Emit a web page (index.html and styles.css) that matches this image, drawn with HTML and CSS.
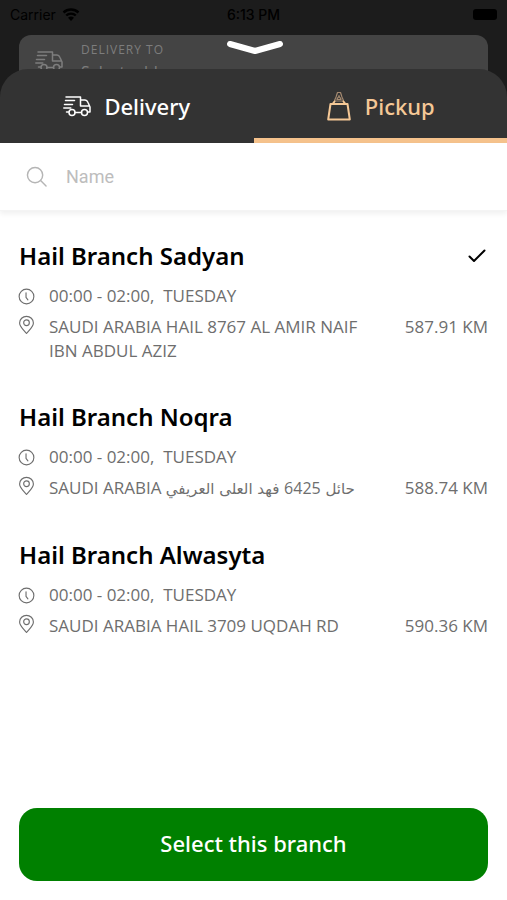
FILE: index.html
```
<!DOCTYPE html>
<html lang="en">
<head>
    <meta charset="UTF-8">
    <meta name="viewport" content="width=device-width, initial-scale=1.0">
    <title>Select branch</title>
    <link rel="stylesheet" href="styles.css">
</head>
<body>
    <!-- shared icons -->
    <svg class="sprite" aria-hidden="true">
        <symbol id="icon-truck" viewBox="0 0 28 22">
            <path d="M3 2h14.500v3M17.500 5h4.500q2 0 3 2.500l2 4.500v5h-2M17.500 5v6h8M3.500 17h2M2.500 5.500h9M1.500 9.500h8M0.800 13h7"/>
            <circle cx="9" cy="17.500" r="3"/>
            <circle cx="21.500" cy="17.500" r="3"/>
            <path d="M12 17.500h6.500"/>
        </symbol>
        <symbol id="icon-clock" viewBox="0 0 18 18">
            <circle cx="9" cy="9" r="7.800"/>
            <path d="M8.500 5v5l2 2.500"/>
        </symbol>
        <symbol id="icon-pin" viewBox="0 0 18 20">
            <path d="M9 19C6.500 15.500 1.700 12 1.700 7.800a7.300 7 0 0 1 14.600 0C16.300 12 11.500 15.500 9 19z"/>
            <circle cx="9" cy="7.600" r="3"/>
        </symbol>
    </svg>

    <!-- page behind the sheet -->
    <div class="backdrop">
        <div class="status">
            <span class="carrier">Carrier
                <svg class="wifi" viewBox="0 0 18 13">
                    <path d="M1.500 4.500a11 11 0 0 1 15 0M4.200 7.500a7 7 0 0 1 9.600 0"/>
                    <path class="wifi-dot" d="M6 9.800a4.500 4.500 0 0 1 6 0L9 13z"/>
                </svg>
            </span>
            <span class="time">6:13 PM</span>
            <span class="battery-wrap"><span class="battery"></span></span>
        </div>
        <div class="address">
            <svg class="icon-truck"><use href="#icon-truck"/></svg>
            <div>
                <div class="address-label">DELIVERY TO</div>
                <div class="address-value">Select address</div>
            </div>
        </div>
    </div>

    <button class="handle" aria-label="Close">
        <svg viewBox="0 0 58 16"><path d="M4 4l25 7 25-7"/></svg>
    </button>

    <main class="sheet">
        <nav class="tabs">
            <button class="tab">
                <svg class="icon-truck"><use href="#icon-truck"/></svg>
                Delivery
            </button>
            <button class="tab selected">
                <svg class="icon-bag" viewBox="0 0 24 32">
                    <path class="bag-handle" d="M7.500 11.500c0-2.500 1.500-3 2-6L10.500 2.500h3l1 3c.5 3 2 3.500 2 6M10 9.500c0-2 2-1.500 2-4 0 2.500 2 2 2 4zM8.500 11h7"/>
                    <path class="bag-body" d="M3.500 14h17l2.300 15.500H1.200zM6 13.500l1.500-2M18 13.500l-1.500-2"/>
                </svg>
                Pickup
            </button>
        </nav>

        <label class="search">
            <svg class="icon-search" viewBox="0 0 22 22"><circle cx="9.500" cy="9.500" r="8"/><path d="M15.300 15.300L21 21"/></svg>
            <input type="text" placeholder="Name" aria-label="Name">
        </label>

        <div class="branches">
            <section class="branch">
                <div class="branch-head">
                    <h2>Hail Branch Sadyan</h2>
                    <svg class="icon-check" viewBox="0 0 20 16"><path d="M1.500 8.500l4.500 4.500L16.500 2.500"/></svg>
                </div>
                <div class="row">
                    <svg class="icon-clock"><use href="#icon-clock"/></svg>
                    <p>00:00 - 02:00,&nbsp; TUESDAY</p>
                </div>
                <div class="row">
                    <svg class="icon-pin"><use href="#icon-pin"/></svg>
                    <p>SAUDI ARABIA HAIL 8767 AL AMIR NAIF IBN ABDUL AZIZ</p>
                    <span class="distance">587.91 KM</span>
                </div>
            </section>

            <section class="branch">
                <div class="branch-head">
                    <h2>Hail Branch Noqra</h2>
                </div>
                <div class="row">
                    <svg class="icon-clock"><use href="#icon-clock"/></svg>
                    <p>00:00 - 02:00,&nbsp; TUESDAY</p>
                </div>
                <div class="row">
                    <svg class="icon-pin"><use href="#icon-pin"/></svg>
                    <p>SAUDI ARABIA <span class="arabic" lang="ar" dir="rtl">حائل <span class="digits">6425</span> فهد العلى العريفي</span></p>
                    <span class="distance">588.74 KM</span>
                </div>
            </section>

            <section class="branch">
                <div class="branch-head">
                    <h2>Hail Branch Alwasyta</h2>
                </div>
                <div class="row">
                    <svg class="icon-clock"><use href="#icon-clock"/></svg>
                    <p>00:00 - 02:00,&nbsp; TUESDAY</p>
                </div>
                <div class="row">
                    <svg class="icon-pin"><use href="#icon-pin"/></svg>
                    <p>SAUDI ARABIA HAIL 3709 UQDAH RD</p>
                    <span class="distance">590.36 KM</span>
                </div>
            </section>
        </div>

        <button class="submit">Select this branch</button>
    </main>
</body>
</html>
```
FILE: styles.css
```
* {
    box-sizing: border-box;
}

body {
    margin: 0;
    min-height: 100vh;
    display: flex;
    flex-direction: column;
    background: #1c1c1c;
    font-family: "Open Sans", "DejaVu Sans", sans-serif;
    color: #6e6e6e;
}

h2, p {
    margin: 0;
}

button {
    border: 0;
    padding: 0;
    background: none;
    font-family: inherit;
    cursor: pointer;
}

svg {
    flex: none;
    fill: none;
    stroke: currentColor;
    stroke-width: 1.5;
    stroke-linecap: round;
    stroke-linejoin: round;
}

.sprite {
    position: absolute;
    width: 0;
    height: 0;
}

/* page behind */
.backdrop {
    height: 97px;
    margin-bottom: -28px;
    overflow: hidden;
}

.status {
    display: grid;
    grid-template-columns: 1fr auto 1fr;
    align-items: center;
    height: 28px;
    margin-bottom: 7px;
    padding: 0 10px;
    font-family: Inter, sans-serif;
    font-size: 14px;
    color: #000;
}

.carrier {
    display: flex;
    align-items: center;
    gap: 6px;
}

.wifi {
    width: 18px;
    height: 13px;
    stroke-width: 2.4;
    stroke-linecap: butt;
}

.wifi-dot {
    fill: #000;
    stroke: none;
}

.time {
    font-weight: 500;
}

.battery-wrap {
    display: flex;
    justify-content: flex-end;
}

.battery {
    width: 24px;
    height: 11px;
    border-radius: 3px;
    background: #000;
}

.address {
    display: flex;
    gap: 18px;
    height: 80px;
    margin: 0 19px;
    padding: 6px 16px;
    border-radius: 12px;
    background: #444;
    color: #7d7d7d;
}

.address .icon-truck {
    margin-top: 9px;
}

.address-label {
    font-size: 12px;
    line-height: 18px;
    letter-spacing: 1px;
}

.address-value {
    font-size: 16px;
    line-height: 26px;
}

.handle {
    position: absolute;
    top: 40px;
    left: 50%;
    width: 58px;
    height: 16px;
    margin-left: -28px;
    color: #fff;
}

.handle svg {
    display: block;
    stroke-width: 6;
}

/* sheet */
.sheet {
    position: relative;
    flex: 1;
    display: flex;
    flex-direction: column;
    background: #fff;
    border-radius: 60px 60px 0 0;
}

.tabs {
    display: grid;
    grid-template-columns: 1fr 1fr;
    height: 74px;
    border-radius: 28px 28px 0 0;
    background: #333;
}

.tab {
    display: flex;
    align-items: center;
    justify-content: center;
    gap: 13px;
    border-bottom: 5px solid transparent;
    padding-top: 5px;
    font-family: "Noto Sans", sans-serif;
    font-size: 22px;
    font-weight: 500;
    color: #fff;
}

.tab.selected {
    border-color: #f5c28c;
    color: #f5c896;
}

.icon-truck {
    width: 28px;
    height: 22px;
}

.icon-bag {
    width: 26px;
    height: 32px;
}

.bag-body {
    stroke-width: 2;
}

.bag-handle {
    stroke: #a58a70;
    stroke-width: 1.2;
}

.search {
    display: flex;
    align-items: center;
    gap: 19px;
    height: 68px;
    padding: 0 26px;
    border-bottom: 1px solid #f4f4f4;
    box-shadow: 0 3px 5px rgba(0, 0, 0, 0.06);
    color: #b5b5b5;
}

.icon-search {
    width: 21px;
    height: 21px;
}

.search input {
    flex: 1;
    min-width: 0;
    border: 0;
    padding: 0;
    outline: none;
    background: none;
    font-family: Roboto, sans-serif;
    font-size: 18px;
    color: #333;
}

.search input::placeholder {
    color: #bdbdbd;
}

.branches {
    flex: 1;
    display: flex;
    flex-direction: column;
    gap: 36px;
    padding: 27px 19px;
}

.branch {
    display: flex;
    flex-direction: column;
    gap: 7px;
}

.branch-head {
    display: flex;
    align-items: center;
    justify-content: space-between;
    margin-bottom: 3px;
    color: #000;
}

h2 {
    font-family: "Noto Sans", sans-serif;
    font-size: 24px;
    line-height: 36px;
    font-weight: 600;
}

.icon-check {
    width: 20px;
    height: 16px;
    stroke-width: 2;
}

.row {
    display: flex;
    font-size: 17px;
    line-height: 24px;
}

.row p {
    flex: 1;
    padding-right: 30px;
}

.row svg {
    margin: 0 14px 0 -1px;
    stroke-width: 1.2;
}

.icon-clock {
    width: 17px;
    height: 17px;
    align-self: center;
}

.icon-pin {
    width: 17px;
    height: 20px;
}

.arabic {
    font-family: "DejaVu Sans", sans-serif;
    font-size: 15px;
}

.digits {
    font-family: "Open Sans", sans-serif;
    font-size: 16px;
}

.submit {
    height: 73px;
    margin: 0 19px 19px;
    border-radius: 18px;
    padding-bottom: 3px;
    background: #008000;
    color: #fff;
    font-family: "Noto Sans", sans-serif;
    font-size: 22px;
    font-weight: 500;
}
```
